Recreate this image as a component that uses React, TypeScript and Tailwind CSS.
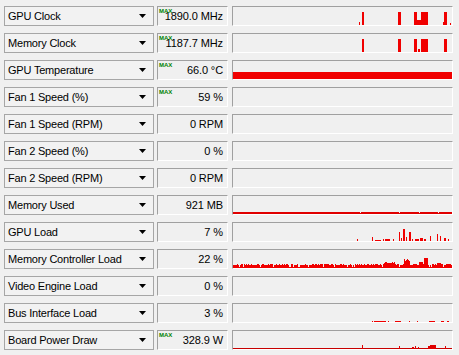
import React from "react";

type Bar = [number, number, number]; // x, width, height (from bottom)

function rng(seed: number) {
  let s = seed;
  return () => {
    s = (s * 9301 + 49297) % 233280;
    return s / 233280;
  };
}

const W = 219;
const H = 18;

const gpuClock: Bar[] = [
  [126, 1, 3], [129, 2, 13], [165, 3, 13], [181, 3, 13], [184, 4, 5], [188, 7, 13], [210, 1, 3], [211, 3, 13], [217, 1, 2],
];
const memClock: Bar[] = [
  [129, 2, 13], [165, 3, 13], [181, 3, 13], [185, 2, 3], [188, 7, 13], [211, 3, 13],
];

const memCtrl: Bar[] = (() => {
  const r = rng(7);
  const out: Bar[] = [];
  for (let x = 0; x < W; x++) {
    let h = 3 + Math.floor(r() * 2);
    if (r() < 0.1) h = 1;
    if (x > 150 && x < 162) h = 5 + Math.floor(r() * 2);
    if (x > 170 && x < 177) h = 7 + Math.floor(r() * 4);
    if (x > 185 && x < 190) h = 6;
    if (x > 190 && x < 195) h = 10;
    if (x > 203 && x < 208) h = 5;
    if (x > 212 && x < 216) h = 4;
    out.push([x, 1, h]);
  }
  return out;
})();

const gpuLoad: Bar[] = [
  [124, 1, 2], [139, 1, 4], [142, 6, 1], [150, 1, 2], [152, 5, 2], [160, 1, 2], [166, 1, 9], [168, 1, 3], [170, 2, 12],
  [173, 1, 4], [176, 2, 9], [179, 1, 2], [182, 4, 2], [187, 3, 3], [191, 2, 2], [197, 1, 5], [204, 1, 7], [207, 1, 5],
  [211, 2, 3], [215, 1, 2],
];

const busLoad: Bar[] = [
  [139, 1, 1], [141, 12, 1], [155, 1, 1], [162, 6, 1], [176, 1, 1], [184, 1, 1], [196, 6, 1], [208, 3, 1], [214, 2, 1],
];

const power: Bar[] = [
  [129, 1, 4], [166, 1, 3], [179, 2, 2], [182, 1, 3], [185, 1, 2], [195, 2, 3], [197, 6, 4], [212, 1, 3],
];

function Graph({ kind }: { kind: string }) {
  let content: React.ReactNode = null;
  if (kind === "gpuClock" || kind === "memClock") {
    const bars = kind === "gpuClock" ? gpuClock : memClock;
    content = bars.map((b, i) => <rect key={i} x={b[0]} y={H - b[2]} width={b[1]} height={b[2]} fill="#f00000" />);
  } else if (kind === "temp") {
    content = <rect x={0} y={H - 7} width={W} height={7} fill="#f00000" />;
  } else if (kind === "memUsed") {
    content = (
      <>
        <rect x={0} y={H - 2} width={W} height={2} fill="#e00000" />
        {[127, 166, 186, 205].map((x, i) => (
          <rect key={i} x={x} y={H - 2} width={1} height={1} fill="#f0f0f0" />
        ))}
      </>
    );
  } else if (kind === "gpuLoad") {
    content = gpuLoad.map((b, i) => <rect key={i} x={b[0]} y={H - b[2]} width={b[1]} height={b[2]} fill="#f00000" />);
  } else if (kind === "memCtrl") {
    content = memCtrl.map((b, i) => <rect key={i} x={b[0]} y={H - b[2]} width={b[1]} height={b[2]} fill="#f00000" />);
  } else if (kind === "bus") {
    content = busLoad.map((b, i) => <rect key={i} x={b[0]} y={H - b[2]} width={b[1]} height={b[2]} fill="#f00000" />);
  } else if (kind === "power") {
    content = (
      <>
        <rect x={0} y={H - 1} width={W} height={1} fill="#c80000" />
        {power.map((b, i) => (
          <rect key={i} x={b[0]} y={H - b[2]} width={b[1]} height={b[2]} fill="#e00000" />
        ))}
      </>
    );
  }
  return (
    <div className="h-[20px] w-[221px] border-t border-l border-t-[#a0a0a0] border-l-[#a0a0a0] border-b border-r border-b-white border-r-white bg-[#f0f0f0]">
      <svg width={W} height={H} className="block">
        {content}
      </svg>
    </div>
  );
}

const rows: { label: string; value: string; max?: boolean; graph: string }[] = [
  { label: "GPU Clock", value: "1890.0 MHz", max: true, graph: "gpuClock" },
  { label: "Memory Clock", value: "1187.7 MHz", max: true, graph: "memClock" },
  { label: "GPU Temperature", value: "66.0 °C", max: true, graph: "temp" },
  { label: "Fan 1 Speed (%)", value: "59 %", max: true, graph: "none" },
  { label: "Fan 1 Speed (RPM)", value: "0 RPM", graph: "none" },
  { label: "Fan 2 Speed (%)", value: "0 %", graph: "none" },
  { label: "Fan 2 Speed (RPM)", value: "0 RPM", graph: "none" },
  { label: "Memory Used", value: "921 MB", graph: "memUsed" },
  { label: "GPU Load", value: "7 %", graph: "gpuLoad" },
  { label: "Memory Controller Load", value: "22 %", graph: "memCtrl" },
  { label: "Video Engine Load", value: "0 %", graph: "none" },
  { label: "Bus Interface Load", value: "3 %", graph: "bus" },
  { label: "Board Power Draw", value: "328.9 W", max: true, graph: "power" },
];

export default function App() {
  return (
    <div
      className="w-[459px] h-[355px] bg-[#f0f0f0] text-black flex flex-col gap-[7px] pt-[6px] pl-[4px] overflow-hidden"
      style={{ fontFamily: '"Liberation Sans", Arial, sans-serif' }}
    >
      {rows.map((r) => (
        <div key={r.label} className="flex items-center h-[20px]">
          <div className="w-[150px] h-[20px] border border-[#a6a6a6] bg-[#f2f2f2] flex items-center justify-between pl-[3px] pr-[7px]">
            <span className="text-[11px] tracking-[-0.2px] leading-none whitespace-nowrap">{r.label}</span>
            <svg width="7" height="4" className="block">
              <polygon points="0,0 7,0 3.5,4" fill="#000" />
            </svg>
          </div>
          <div className="relative ml-[3px] w-[71px] h-[20px] border-t border-l border-t-[#a0a0a0] border-l-[#a0a0a0] border-b border-r border-b-white border-r-white bg-[#f0f0f0] flex items-center justify-end pr-[4px]">
            {r.max && (
              <span className="absolute left-[1px] top-[1px] text-[6px] leading-none text-[#008000] font-bold">
                MAX
              </span>
            )}
            <span className="text-[11px] tracking-[-0.1px] leading-none whitespace-nowrap">{r.value}</span>
          </div>
          <div className="ml-[4px]">
            <Graph kind={r.graph} />
          </div>
        </div>
      ))}
    </div>
  );
}
